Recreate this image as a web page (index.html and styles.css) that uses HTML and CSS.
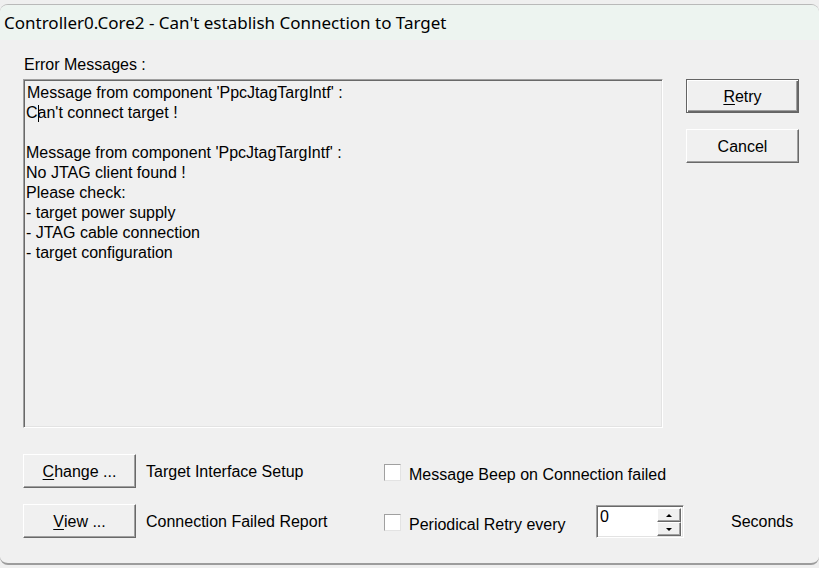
FILE: index.html
```html
<!DOCTYPE html>
<html>
<head>
<meta charset="utf-8">
<link rel="stylesheet" href="styles.css">
</head>
<body>
<div class="window">
  <div class="titlebar">Controller0.Core2 - Can't establish Connection to Target</div>
  <div class="content">
    <div class="top">
      <div class="messages">
        <div class="label">Error Messages :</div>
        <div class="msgbox">
          <div class="line first">Message from component 'PpcJtagTargIntf' :</div>
          <div class="line">C<span class="caret"></span>an't connect target !</div>
          <div class="line">&nbsp;</div>
          <div class="line">Message from component 'PpcJtagTargIntf' :</div>
          <div class="line">No JTAG client found !</div>
          <div class="line">Please check:</div>
          <div class="line">- target power supply</div>
          <div class="line">- JTAG cable connection</div>
          <div class="line">- target configuration</div>
        </div>
      </div>
      <div class="actions">
        <div class="btn default"><u>R</u>etry</div>
        <div class="btn">Cancel</div>
      </div>
    </div>
    <div class="bottom">
      <div class="btn"><u>C</u>hange ...</div>
      <div class="text pad">Target Interface Setup</div>
      <div class="check"><span class="box"></span><span>Message Beep on Connection failed</span></div>
      <div></div>
      <div></div>

      <div class="btn"><u>V</u>iew ...</div>
      <div class="text pad">Connection Failed Report</div>
      <div class="check"><span class="box"></span><span>Periodical Retry every</span></div>
      <div class="spinner">
        <div class="field">0</div>
        <div class="spins">
          <div class="spin"><span class="up"></span></div>
          <div class="spin"><span class="down"></span></div>
        </div>
      </div>
      <div class="text">Seconds</div>
    </div>
  </div>
</div>
</body>
</html>
```

FILE: styles.css
```css
html, body {
  margin: 0;
  padding: 0;
  background: #efefef;
}
body {
  padding-top: 4px;
  font-family: "Liberation Sans", Arial, sans-serif;
  font-size: 16px;
  color: #000;
}
.window {
  width: 819px;
  height: 561px;
  box-sizing: border-box;
  border-top: 1px solid #b9b9b9;
  border-bottom: 2px solid #9c9c9c;
  border-radius: 8px 8px 8px 8px;
  background: #f0f0f0;
  overflow: hidden;
  display: flex;
  flex-direction: column;
}
.titlebar {
  height: 35px;
  background: #edf4f0;
  font-family: "Noto Sans", "Open Sans", sans-serif;
  font-size: 17px;
  line-height: 35px;
  padding-left: 4px;
  color: #000;
  white-space: nowrap;
}
.content {
  padding: 16px 0 0 23px;
}
.top {
  display: flex;
  gap: 23px;
  align-items: flex-start;
}
.label {
  height: 18px;
  line-height: 18px;
  margin-bottom: 5px;
  padding-left: 1px;
}
.msgbox {
  width: 640px;
  height: 349px;
  box-sizing: border-box;
  border-style: solid;
  border-width: 1px;
  border-color: #a0a0a0 #ffffff #ffffff #a0a0a0;
  box-shadow: inset 1px 1px 0 #696969, inset -1px -1px 0 #e3e3e3;
  padding: 3px 2px 0 2px;
}
.line {
  line-height: 20px;
  height: 20px;
  white-space: nowrap;
}
.line.first {
  padding-left: 1px;
}
.caret {
  display: inline-block;
  width: 0;
  height: 17px;
  border-left: 1px solid #000;
  margin-right: -1px;
  vertical-align: -4px;
}
.actions {
  padding-top: 23px;
  display: flex;
  flex-direction: column;
  gap: 16px;
}
.btn {
  width: 113px;
  height: 34px;
  box-sizing: border-box;
  display: flex;
  align-items: center;
  justify-content: center;
  padding-top: 2px;
  background: #f0f0f0;
  border-style: solid;
  border-width: 1px;
  border-color: #ffffff #696969 #696969 #ffffff;
  box-shadow: inset -1px -1px 0 #a0a0a0, inset 1px 1px 0 #f0f0f0;
}
.btn.default {
  border-color: #646464;
  box-shadow: inset 1px 1px 0 #ffffff, inset -1px -1px 0 #696969, inset -2px -2px 0 #a0a0a0;
}
.btn u {
  text-decoration-thickness: 1px;
  text-underline-offset: 2px;
}
.bottom {
  margin-top: 26px;
  display: grid;
  grid-template-columns: 113px 248px 212px 135px auto;
  grid-auto-rows: 34px;
  row-gap: 16px;
  align-items: center;
}
.text {
  white-space: nowrap;
  padding-top: 2px;
}
.pad {
  padding-left: 10px;
}
.check {
  display: flex;
  align-items: center;
  gap: 8px;
  white-space: nowrap;
  padding-top: 7px;
}
.check .box {
  flex: 0 0 17px;
  width: 17px;
  height: 17px;
  box-sizing: border-box;
  background: #fff;
  border-style: solid;
  border-width: 1px;
  border-color: #a0a0a0 #e3e3e3 #e3e3e3 #a0a0a0;
  margin-top: -4px;
}
.spinner {
  width: 88px;
  height: 33px;
  box-sizing: border-box;
  display: flex;
  align-self: start;
  margin-top: 1px;
  background: #fff;
  border-style: solid;
  border-width: 1px;
  border-color: #a0a0a0 #ffffff #ffffff #a0a0a0;
  box-shadow: inset 1px 1px 0 #696969, inset -1px -1px 0 #e3e3e3;
  padding: 2px 2px 1px 2px;
}
.field {
  flex: 1;
  line-height: 18px;
  padding-left: 1px;
  font-size: 16px;
}
.spins {
  width: 24px;
  display: flex;
  flex-direction: column;
}
.spin {
  flex: 1;
  box-sizing: border-box;
  background: #f0f0f0;
  border-style: solid;
  border-width: 1px;
  border-color: #ffffff #696969 #696969 #ffffff;
  box-shadow: inset -1px -1px 0 #a0a0a0;
  display: flex;
  align-items: center;
  justify-content: center;
}
.up, .down {
  width: 0;
  height: 0;
  border-left: 3px solid transparent;
  border-right: 3px solid transparent;
}
.up {
  border-bottom: 3px solid #000;
}
.down {
  border-top: 3px solid #000;
}
```
